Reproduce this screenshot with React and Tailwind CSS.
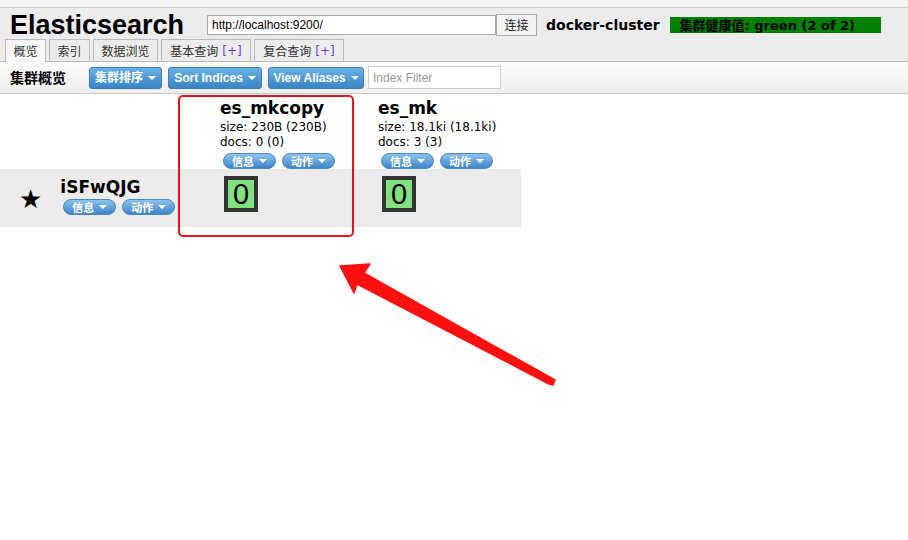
import React from 'react';

const sans = { fontFamily: '"DejaVu Sans", Verdana, "Noto Sans CJK SC", sans-serif' };

function Caret() {
  return <span className="ml-[5px] inline-block h-0 w-0 border-x-[4px] border-t-[4px] border-x-transparent border-t-white align-middle" />;
}

function ToolBtn({ children, w }) {
  return (
    <button
      className={`flex h-[22px] ${w} items-center justify-center rounded-[3px] border border-[#3b7cbf] bg-gradient-to-b from-[#68b2e6] to-[#3b84c6] text-[12px] font-bold text-white`}
      style={{ fontFamily: '"Liberation Sans", "Noto Sans CJK SC", sans-serif' }}
    >
      {children}
      <Caret />
    </button>
  );
}

function Pill({ children }) {
  return (
    <button
      className="flex h-[16px] w-[53px] items-center justify-center rounded-full border border-[#4a86c0] bg-gradient-to-b from-[#8cc4ee] to-[#3d85c8] text-[11px] font-bold leading-none text-white"
      style={{ fontFamily: '"Noto Sans CJK SC", sans-serif' }}
    >
      {children}
      <Caret />
    </button>
  );
}

function Shard() {
  return (
    <div className="flex h-[36px] w-[34px] items-center justify-center border-[4px] border-[#333] bg-[#7fe27f] text-[29px] leading-none text-black" style={{ fontFamily: '"Liberation Sans", sans-serif' }}>
      0
    </div>
  );
}

function Tab({ label, plus, active, w }) {
  return (
    <div
      className={`flex h-[22px] ${w} items-center justify-center border border-b-0 border-[#bbb] text-[12px] text-[#333] ${active ? 'bg-[#f7f7f7] h-[23px] -mb-px' : 'bg-[#ececec]'}`}
      style={{ fontFamily: '"Noto Sans CJK SC", sans-serif' }}
    >
      {label}
      {plus && <span className="ml-[4px] text-[#6a3fd6]" style={{ fontFamily: '"DejaVu Sans", sans-serif' }}>[+]</span>}
    </div>
  );
}

export default function App() {
  return (
    <div className="relative h-[540px] w-[908px] overflow-hidden bg-white" style={sans}>
      <div className="h-[8px] border-b border-[#d0d0d0] bg-[#f6f6f6]" />
      <div className="bg-[#ececec]">
        <div className="flex h-[32px] items-center pl-[10px] pt-[2px]">
          <div className="w-[197px] text-[27px] font-bold leading-none text-black" style={{ fontFamily: '"Liberation Sans", sans-serif' }}>Elasticsearch</div>
          <div className="flex h-[20px] w-[289px] items-center border border-[#aaa] bg-white px-[4px] text-[12px] text-black" style={{ fontFamily: '"Liberation Sans", sans-serif' }}>
            http://localhost:9200/
          </div>
          <button className="flex h-[22px] w-[41px] items-center justify-center border border-[#aaa] bg-[#f3f3f3] text-[12px] text-[#222]" style={{ fontFamily: '"Noto Sans CJK SC", sans-serif' }}>
            连接
          </button>
          <div className="ml-[9px] text-[14px] font-bold text-black">docker-cluster</div>
          <div className="ml-[10px] flex h-[16px] w-[211px] items-center pl-[10px] text-[13px] font-bold leading-none text-black bg-[#008000]" style={{ fontFamily: '"DejaVu Sans", "Noto Sans CJK SC", sans-serif' }}>
            集群健康值: green (2 of 2)
          </div>
        </div>
        <div className="flex h-[22px] items-end gap-[3px] border-b border-[#bbb] pl-[5px]">
          <Tab label="概览" active w="w-[41px]" />
          <Tab label="索引" w="w-[41px]" />
          <Tab label="数据浏览" w="w-[65px]" />
          <Tab label="基本查询" plus w="w-[90px]" />
          <Tab label="复合查询" plus w="w-[90px]" />
        </div>
      </div>
      <div className="flex h-[32px] items-center border-b border-[#c8c8c8] bg-gradient-to-b from-[#fbfbfb] to-[#efefef] pl-[10px]">
        <div className="w-[79px] text-[14px] font-bold text-black" style={{ fontFamily: '"Noto Sans CJK SC", sans-serif' }}>集群概览</div>
        <div className="flex items-center gap-[6px]">
          <ToolBtn w="w-[73px]">集群排序</ToolBtn>
          <ToolBtn w="w-[94px]">Sort Indices</ToolBtn>
          <ToolBtn w="w-[96px]">View Aliases</ToolBtn>
        </div>
        <div className="ml-[4px] flex h-[23px] w-[133px] items-center border border-[#ccc] bg-white px-[4px] text-[12px] text-[#999]" style={{ fontFamily: '"Liberation Sans", sans-serif' }}>
          Index Filter
        </div>
      </div>

      <div className="w-[521px]">
        <div className="flex h-[75px]">
          <div className="w-[212px]" />
          <div className="w-[158px] pl-[8px] pt-[5px]">
            <div className="text-[17px] font-bold leading-[19px] text-black">es_mkcopy</div>
            <div className="mt-[2px] text-[12px] leading-[15px] text-black">size: 230B (230B)</div>
            <div className="text-[12px] leading-[15px] text-black">docs: 0 (0)</div>
            <div className="mt-[3px] flex gap-[6px] pl-[3px]"><Pill>信息</Pill><Pill>动作</Pill></div>
          </div>
          <div className="w-[151px] pl-[8px] pt-[5px]">
            <div className="text-[17px] font-bold leading-[19px] text-black">es_mk</div>
            <div className="mt-[2px] text-[12px] leading-[15px] text-black">size: 18.1ki (18.1ki)</div>
            <div className="text-[12px] leading-[15px] text-black">docs: 3 (3)</div>
            <div className="mt-[3px] flex gap-[6px] pl-[3px]"><Pill>信息</Pill><Pill>动作</Pill></div>
          </div>
        </div>
        <div className="flex h-[58px] bg-[#ececec]">
          <div className="flex w-[212px] items-start">
            <div className="ml-[19px] mt-[17px] text-[26px] leading-none text-black" style={{ fontFamily: '"DejaVu Sans", sans-serif' }}>★</div>
            <div className="ml-[18px] mt-[8px]">
              <div className="text-[17px] font-bold leading-[20px] text-black">iSFwQJG</div>
              <div className="mt-[2px] flex gap-[6px] pl-[3px]"><Pill>信息</Pill><Pill>动作</Pill></div>
            </div>
          </div>
          <div className="w-[158px] pl-[12px] pt-[7px]"><Shard /></div>
          <div className="w-[151px] pl-[12px] pt-[7px]"><Shard /></div>
        </div>
      </div>

      <div className="absolute left-[178px] top-[95px] h-[142px] w-[176px] rounded-[5px] border-2 border-[#e8141c]" />
      <svg className="absolute left-0 top-0" width="908" height="540" viewBox="0 0 908 540">
        <polygon
          points="340,266 370,264 364,273 555,380 553,385 549,384 357,284 354,293"
          fill="#ff1010"
          stroke="#ff1010"
          strokeWidth="1.5"
          strokeLinejoin="round"
        />
      </svg>
    </div>
  );
}
